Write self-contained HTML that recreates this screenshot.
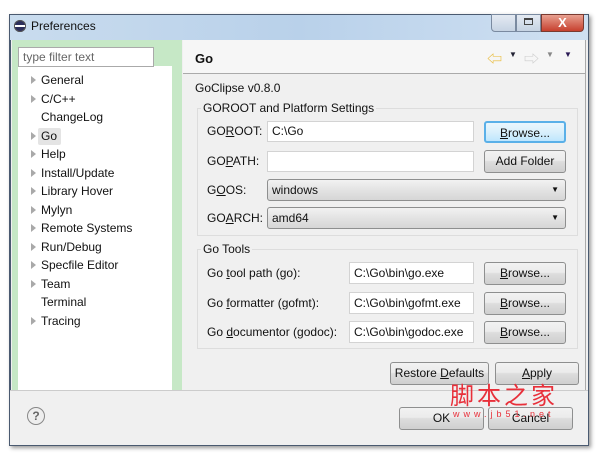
<!DOCTYPE html>
<html><head><style>
body{margin:0;width:600px;height:456px;background:#fff;position:relative;overflow:hidden;font-family:"Liberation Sans","Noto Sans CJK SC",sans-serif;font-size:12px;color:#111}
.a{position:absolute}
.btn{position:absolute;border:1px solid #8e8f8f;border-radius:3px;background:linear-gradient(#f2f2f2,#ebebeb 45%,#dddddd 50%,#cfcfcf);text-align:center;box-sizing:border-box;font-size:12px}
.inp{position:absolute;background:#fff;border:1px solid #d3d3d3;box-sizing:border-box;padding-left:4px;font-size:12px}
.cmb{position:absolute;border:1px solid #8e8f8f;border-radius:3px;background:linear-gradient(#f2f2f2,#e3e3e3 50%,#d6d6d6);box-sizing:border-box;padding-left:4px;font-size:12px}
.tri{position:absolute;left:31px;width:0;height:0;border-left:5px solid #a9a9a9;border-top:4px solid transparent;border-bottom:4px solid transparent}
.ti{position:absolute;left:41px}
u{text-decoration:underline}
</style></head><body>
<div class="a" style="left:9px;top:14px;width:580px;height:432px;background:#f0f0f0;border:1px solid #4a5a70;box-shadow:2px 2px 4px #999;box-sizing:border-box"></div>
<div class="a" style="left:10px;top:15px;width:578px;height:25px;background:linear-gradient(90deg,#c9dcee,#b9d1ea 50%,#cfe0f2)"></div>
<div class="a" style="left:14px;top:20px;width:12px;height:12px;border-radius:50%;background:#2c2f5d;box-shadow:inset 0 0 0 1px #555"></div>
<div class="a" style="left:15px;top:25px;width:10px;height:2px;background:#fff"></div>
<div class="a" style="left:31px;top:19px;font-size:12px">Preferences</div>
<div class="a" style="left:491px;top:14px;width:25px;height:18px;background:linear-gradient(#e4eaf2,#c6d3e3);border:1px solid #7a8aa0;box-sizing:border-box;border-radius:0 0 0 4px"></div>
<div class="a" style="left:516px;top:14px;width:25px;height:18px;background:linear-gradient(#e4eaf2,#c6d3e3);border:1px solid #7a8aa0;box-sizing:border-box"></div>
<div class="a" style="left:524px;top:18px;width:9px;height:7px;border:1px solid #444;border-top-width:2px;box-sizing:border-box"></div>
<div class="a" style="left:541px;top:14px;width:43px;height:18px;background:linear-gradient(#e8a090,#c7402e);border:1px solid #7a3a30;box-sizing:border-box;border-radius:0 0 4px 0;color:#fff;font-weight:bold;text-align:center;line-height:16px;font-size:13px">X</div>

<div class="a" style="left:12px;top:40px;width:170px;height:350px;background:#c6e8c6"></div>
<div class="a" style="left:18px;top:66px;width:154px;height:324px;background:#fff"></div>
<div class="inp" style="left:18px;top:47px;width:136px;height:20px;color:#666;line-height:18px;border-color:#aaa">type filter text</div>
<div class="a" style="left:10px;top:40px;width:1px;height:350px;background:#4a5a70"></div>

<div class="tri" style="top:76px"></div><div class="ti" style="top:73px">General</div>
<div class="tri" style="top:95px"></div><div class="ti" style="top:92px">C/C++</div>
<div class="ti" style="top:110px">ChangeLog</div>
<div class="a" style="left:38px;top:128px;width:23px;height:17px;background:#e4e4e4;border-radius:2px"></div>
<div class="tri" style="top:132px"></div><div class="ti" style="top:129px">Go</div>
<div class="tri" style="top:150px"></div><div class="ti" style="top:147px">Help</div>
<div class="tri" style="top:169px"></div><div class="ti" style="top:166px">Install/Update</div>
<div class="tri" style="top:187px"></div><div class="ti" style="top:184px">Library Hover</div>
<div class="tri" style="top:206px"></div><div class="ti" style="top:203px">Mylyn</div>
<div class="tri" style="top:224px"></div><div class="ti" style="top:221px">Remote Systems</div>
<div class="tri" style="top:243px"></div><div class="ti" style="top:240px">Run/Debug</div>
<div class="tri" style="top:261px"></div><div class="ti" style="top:258px">Specfile Editor</div>
<div class="tri" style="top:280px"></div><div class="ti" style="top:277px">Team</div>
<div class="ti" style="top:295px">Terminal</div>
<div class="tri" style="top:317px"></div><div class="ti" style="top:314px">Tracing</div>

<div class="a" style="left:183px;top:40px;width:402px;height:33px;background:#f6f6f6;border-bottom:1px solid #aaa"></div>
<div class="a" style="left:195px;top:51px;font-weight:bold;font-size:13px">Go</div>
<div class="a" style="left:487px;top:48px;color:#e8b830;font-size:15px">⇦</div>
<div class="a" style="left:509px;top:50px;font-size:8px;color:#223">▼</div>
<div class="a" style="left:524px;top:48px;color:#ccc;font-size:15px">⇨</div>
<div class="a" style="left:546px;top:50px;font-size:8px;color:#888">▼</div>
<div class="a" style="left:564px;top:50px;font-size:8px;color:#2a1a55">▼</div>
<div class="a" style="left:585px;top:40px;width:1px;height:350px;background:#aaa"></div>

<div class="a" style="left:195px;top:81px">GoClipse v0.8.0</div>
<div class="a" style="left:197px;top:108px;width:381px;height:128px;border:1px solid #ddd;box-sizing:border-box"></div>
<div class="a" style="left:201px;top:101px;background:#f0f0f0;padding:0 2px">GOROOT and Platform Settings</div>
<div class="a" style="left:207px;top:124px">GO<u>R</u>OOT:</div>
<div class="inp" style="left:267px;top:121px;width:207px;height:21px;line-height:19px">C:\Go</div>
<div class="btn" style="left:484px;top:121px;width:82px;height:22px;line-height:20px;border:2px solid #5ab0e8;background:linear-gradient(#eaf6fd,#d9f0fc 50%,#bee6fd)"><u>B</u>rowse...</div>
<div class="a" style="left:207px;top:154px">GO<u>P</u>ATH:</div>
<div class="inp" style="left:267px;top:151px;width:207px;height:21px"></div>
<div class="btn" style="left:484px;top:150px;width:82px;height:23px;line-height:21px">Add Folder</div>
<div class="a" style="left:207px;top:183px">G<u>O</u>OS:</div>
<div class="cmb" style="left:267px;top:179px;width:299px;height:22px;line-height:20px">windows<span style="position:absolute;right:6px;font-size:8px">▼</span></div>
<div class="a" style="left:207px;top:211px">GO<u>A</u>RCH:</div>
<div class="cmb" style="left:267px;top:207px;width:299px;height:22px;line-height:20px">amd64<span style="position:absolute;right:6px;font-size:8px">▼</span></div>

<div class="a" style="left:197px;top:249px;width:381px;height:100px;border:1px solid #ddd;box-sizing:border-box"></div>
<div class="a" style="left:201px;top:242px;background:#f0f0f0;padding:0 2px">Go Tools</div>
<div class="a" style="left:207px;top:266px">Go <u>t</u>ool path (go):</div>
<div class="inp" style="left:349px;top:262px;width:125px;height:22px;line-height:20px">C:\Go\bin\go.exe</div>
<div class="btn" style="left:484px;top:262px;width:82px;height:23px;line-height:21px"><u>B</u>rowse...</div>
<div class="a" style="left:207px;top:296px">Go <u>f</u>ormatter (gofmt):</div>
<div class="inp" style="left:349px;top:292px;width:125px;height:22px;line-height:20px">C:\Go\bin\gofmt.exe</div>
<div class="btn" style="left:484px;top:292px;width:82px;height:23px;line-height:21px"><u>B</u>rowse...</div>
<div class="a" style="left:207px;top:325px">Go <u>d</u>ocumentor (godoc):</div>
<div class="inp" style="left:349px;top:321px;width:125px;height:22px;line-height:20px">C:\Go\bin\godoc.exe</div>
<div class="btn" style="left:484px;top:321px;width:82px;height:23px;line-height:21px"><u>B</u>rowse...</div>

<div class="btn" style="left:390px;top:362px;width:99px;height:23px;line-height:21px">Restore <u>D</u>efaults</div>
<div class="btn" style="left:495px;top:362px;width:84px;height:23px;line-height:21px"><u>A</u>pply</div>
<div class="a" style="left:10px;top:390px;width:578px;height:1px;background:#ccc"></div>
<div class="a" style="left:27px;top:407px;width:16px;height:16px;border:1px solid #888;border-radius:50%;text-align:center;line-height:16px;font-weight:bold;color:#666;font-size:12px;background:#eee">?</div>
<div class="btn" style="left:399px;top:407px;width:85px;height:23px;line-height:21px">OK</div>
<div class="btn" style="left:488px;top:407px;width:85px;height:23px;line-height:21px">Cancel</div>
<div class="a" style="left:450px;top:380px;color:#e8303a;font-size:24px;letter-spacing:3px;font-family:'Noto Sans CJK SC',sans-serif;line-height:28px">脚本之家</div>
<div class="a" style="left:453px;top:409px;color:#e8303a;font-size:9px;letter-spacing:4px">www.jb51.net</div>
</body></html>
